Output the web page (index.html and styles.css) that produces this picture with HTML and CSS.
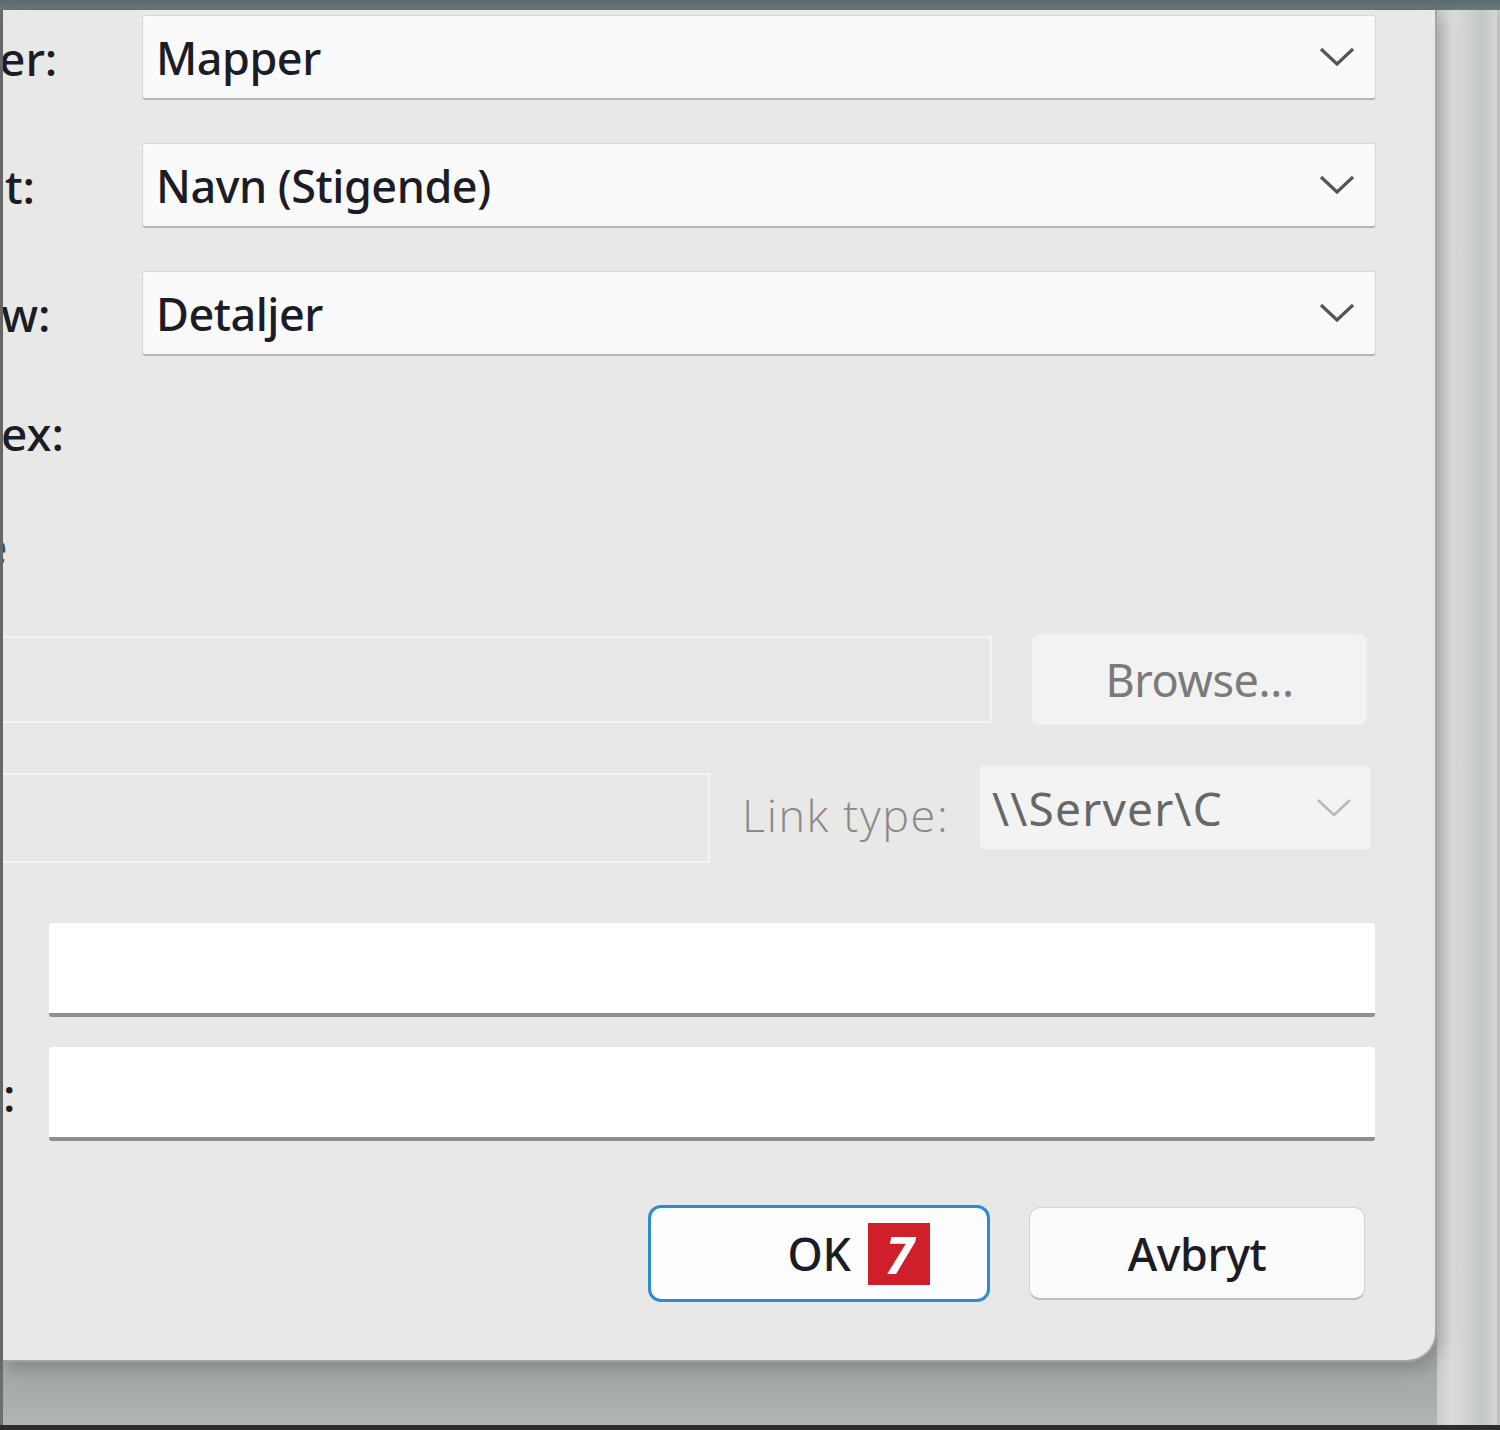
FILE: index.html
```html
<!DOCTYPE html>
<html lang="no">
<head>
<meta charset="utf-8">
<title>Dialog</title>
<link rel="stylesheet" href="styles.css">
</head>
<body>
<div class="screen">
  <div class="topbar"></div>
  <div class="main">
    <div class="leftedge"></div>
    <div class="desk">
      <div class="dialog">
        <div class="row row-combo first">
          <span class="label l-er">er:</span>
          <div class="combo"><span class="value">Mapper</span>
            <svg class="chev" viewBox="0 0 36 20"><polyline points="2,2 18,17 34,2"/></svg></div>
        </div>
        <div class="row row-combo">
          <span class="label l-t">t:</span>
          <div class="combo"><span class="value">Navn (Stigende)</span>
            <svg class="chev" viewBox="0 0 36 20"><polyline points="2,2 18,17 34,2"/></svg></div>
        </div>
        <div class="row row-combo">
          <span class="label l-w">w:</span>
          <div class="combo"><span class="value">Detaljer</span>
            <svg class="chev" viewBox="0 0 36 20"><polyline points="2,2 18,17 34,2"/></svg></div>
        </div>
        <div class="row row-text">
          <span class="label l-ex">ex:</span>
        </div>
        <div class="row row-link">
          <span class="label link">e</span>
        </div>
        <div class="row row-path">
          <div class="field disabled path"></div>
          <div class="btn disabled-btn">Browse...</div>
        </div>
        <div class="row row-linktype">
          <div class="field disabled server"></div>
          <span class="linktype">Link type:</span>
          <div class="combo disabled-combo"><span class="value">\\Server\C</span>
            <svg class="chev" viewBox="0 0 36 20"><polyline points="2,2 18,17 34,2"/></svg></div>
        </div>
        <div class="row row-input first-input">
          <div class="input"></div>
        </div>
        <div class="row row-input second-input">
          <span class="label colon">:</span>
          <div class="input"></div>
        </div>
        <div class="row row-buttons">
          <div class="btn ok">OK <span class="badge">7</span></div>
          <div class="btn cancel">Avbryt</div>
        </div>
      </div>
      <div class="below"></div>
    </div>
    <div class="rightstrip"></div>
    <div class="rightedge"></div>
  </div>
  <div class="bottomline"></div>
</div>
</body>
</html>
```

FILE: styles.css
```css
* { box-sizing: border-box; }
html, body { margin: 0; padding: 0; }
body {
  width: 1500px;
  height: 1430px;
  overflow: hidden;
  background: #a6aaa9;
  font-family: "Noto Sans", "Open Sans", sans-serif;
  font-weight: 500;
  color: #1c1c26;
}
.screen { display: flex; flex-direction: column; width: 1500px; height: 1430px; }
.topbar {
  height: 10px;
  background: linear-gradient(to bottom, #5a6c6b, #6a7a79);
}
.main { display: flex; flex: 1; }
.leftedge { width: 3px; background: #6c6f6e; }
.desk { width: 1434px; display: flex; flex-direction: column; }
.dialog {
  position: relative;
  z-index: 2;
  height: 1352px;
  background: #e8e8e6;
  border-bottom-right-radius: 30px;
  border-right: 2px solid #a3a8a7;
  border-bottom: 2px solid #a0a4a3;
  box-shadow: 4px 6px 18px rgba(0,0,0,0.22);
  overflow: hidden;
  display: flex;
  flex-direction: column;
}
.below {
  flex: 1;
  background: linear-gradient(to bottom, #a4a8a7, #a8acab 60%, #b2b6b5);
}
.rightstrip {
  width: 60px;
  background: linear-gradient(to right, #c9cdcc, #d9dcdb 25%, #c4c8c7 75%, #d4d7d6);
}
.rightedge { width: 3px; background: #bfc3c2; }
.bottomline { height: 5px; background: #2c2e2e; }

/* rows */
.row { display: flex; align-items: center; }
.label {
  font-size: 46px;
  line-height: 60px;
  white-space: nowrap;
}
.row-combo { height: 85px; margin-top: 43px; }
.row-combo.first { margin-top: 5px; }
.row-combo .label { width: 139px; flex: none; overflow: hidden; }
.l-er { text-indent: -4px; }
.l-t { text-indent: 2px; }
.l-w { text-indent: -2px; }
.l-ex { text-indent: -2px; }

.combo {
  width: 1234px;
  height: 85px;
  background: #fafafa;
  border: 1px solid #d6d6d6;
  border-bottom: 2px solid #b4b4b4;
  border-radius: 4px;
  display: flex;
  align-items: center;
  justify-content: space-between;
  padding: 0 20px 0 13px;
}
.value { font-size: 45px; letter-spacing: -0.5px; white-space: nowrap; }
.chev { width: 36px; height: 20px; fill: none; stroke: #565656; stroke-width: 3.2; }

.row-text { height: 60px; margin-top: 47px; }
.row-link { height: 60px; margin-top: 53px; }
.link { color: #1a4f88; text-indent: -22px; overflow: hidden; width: 40px; }

.row-path { margin-top: 58px; height: 91px; }
.field {
  height: 87px;
  border: 2px solid #f3f4f3;
  border-left: none;
  background: #e8e8e6;
}
.path { width: 989px; }
.disabled-btn {
  margin-left: 40px;
  width: 335px;
  height: 91px;
  background: #f1f2f1;
  border-radius: 8px;
  color: #7a7a7a;
  letter-spacing: 1px;
  font-weight: 400;
}
.btn {
  display: flex;
  align-items: center;
  justify-content: center;
  font-size: 45px;
  letter-spacing: -0.4px;
}

.row-linktype { margin-top: 41px; align-items: flex-start; height: 97px; }
.server { width: 707px; height: 90px; margin-top: 7px; }
.linktype {
  margin-left: 32px;
  margin-top: 18px;
  font-size: 45px;
  font-weight: 300;
  color: #8a8a8a;
  width: 238px;
  white-space: nowrap;
  letter-spacing: 1.6px;
  font-family: "Open Sans", "Noto Sans", sans-serif;
}
.disabled-combo {
  width: 390px;
  height: 83px;
  margin-left: 0;
  background: #f2f3f2;
  border: none;
  border-radius: 2px;
  padding: 0 18px 0 12px;
  color: #676767;
}
.disabled-combo .value { font-size: 46px; letter-spacing: 1.2px; font-weight: 400; }
.disabled-combo .chev { stroke: #b9b9b9; stroke-width: 2.6; }

.row-input { height: 94px; }
.first-input { margin-top: 60px; padding-left: 46px; }
.second-input { margin-top: 30px; }
.colon { width: 46px; text-indent: 0; }
.input {
  width: 1326px;
  height: 94px;
  background: #ffffff;
  border-radius: 3px;
  border-bottom: 4px solid #8e8e8e;
}

.row-buttons {
  margin-top: 64px;
  justify-content: flex-end;
  padding-right: 70px;
  gap: 39px;
}
.ok {
  width: 342px;
  height: 97px;
  background: #fdfdfd;
  border: 3px solid #2b8cd0;
  border-radius: 13px;
  gap: 18px;
  padding-left: 80px;
}
.badge {
  width: 62px;
  height: 62px;
  background: #cf1f2a;
  color: #ffffff;
  font-weight: 700;
  font-size: 52px;
  font-style: italic;
  display: flex;
  align-items: center;
  justify-content: center;
  letter-spacing: 0;
}
.cancel {
  width: 336px;
  height: 93px;
  background: #fbfbfb;
  border: 1px solid #d4d4d4;
  border-bottom: 2px solid #bdbdbd;
  border-radius: 11px;
}
```
